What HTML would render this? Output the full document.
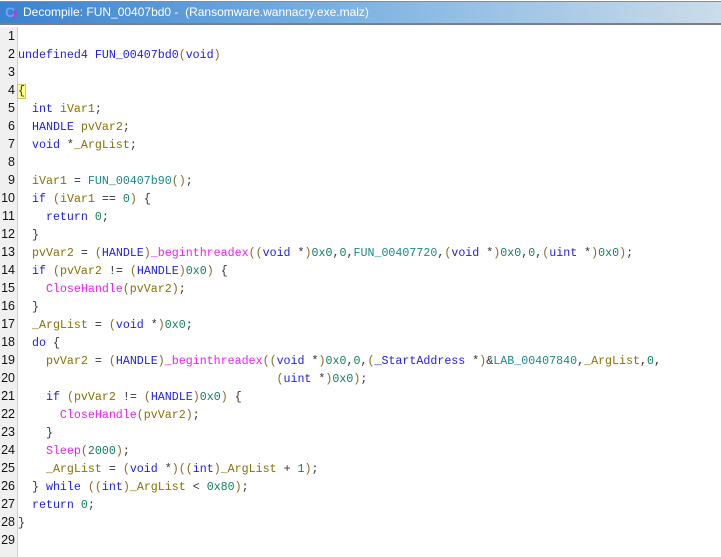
<!DOCTYPE html>
<html><head><style>
body{margin:0;width:721px;height:557px;background:#fff;overflow:hidden;position:relative;font-family:"Liberation Mono",monospace}
#tb{position:absolute;left:0;top:0;width:721px;height:27px;background:#fff}
#tb .bar{position:absolute;left:0;top:1px;width:721px;height:24px;border-top:1px solid #8a8a8a;border-bottom:2px solid #7a7f8a;background:linear-gradient(to right,#3a82cf,#7fb4e2 50%,#cbdcea);box-sizing:border-box}
#tb .t{position:absolute;left:23px;top:5px;font:12px "Liberation Sans",sans-serif;color:#fff;white-space:pre}
#tb .ic{position:absolute;left:5px;top:4px;font:bold 14px "Liberation Sans",sans-serif;color:#6fa0ff}
#tb .ic2{position:absolute;left:13px;top:10px;font:bold italic 10px "Liberation Sans",sans-serif;color:#e020d0}
#gut{position:absolute;left:0;top:27px;width:17px;height:530px;background:#f0f0f0;border-right:1px solid #d0d0d0}
.ln{position:absolute;left:0;width:15px;text-align:right;font:12.5px "Liberation Sans",sans-serif;color:#111;line-height:18px}
.cl{position:absolute;left:18px;font-size:11.65px;line-height:18px;white-space:pre;color:#333}
.k{color:#1e1ee0}.v{color:#8a7000}.f{color:#f020f0}.n{color:#108060}.g{color:#1a8a8a}.p{color:#8a6a20}
.br{background:#ffff90;outline:1px solid #c8c860}
</style></head><body>
<div id="tb"><div class="bar"></div><span class="ic">C</span><span class="ic2">f</span><span class="t">Decompile: FUN_00407bd0 -  (Ransomware.wannacry.exe.malz)</span></div>
<div id="gut"></div>
<div id="code"></div>
<script>
var L=[
'',
'<span class="k">undefined4</span> <span class="k">FUN_00407bd0</span><span class="p">(</span><span class="k">void</span><span class="p">)</span>',
'',
'<span class="br">{</span>',
'  <span class="k">int</span> <span class="v">iVar1</span>;',
'  <span class="k">HANDLE</span> <span class="v">pvVar2</span>;',
'  <span class="k">void</span> *<span class="v">_ArgList</span>;',
'',
'  <span class="v">iVar1</span> = <span class="g">FUN_00407b90</span><span class="p">()</span>;',
'  <span class="k">if</span> <span class="p">(</span><span class="v">iVar1</span> == <span class="n">0</span><span class="p">)</span> {',
'    <span class="k">return</span> <span class="n">0</span>;',
'  }',
'  <span class="v">pvVar2</span> = <span class="p">(</span><span class="k">HANDLE</span><span class="p">)</span><span class="f">_beginthreadex</span><span class="p">((</span><span class="k">void</span> *<span class="p">)</span><span class="n">0x0</span>,<span class="n">0</span>,<span class="g">FUN_00407720</span>,<span class="p">(</span><span class="k">void</span> *<span class="p">)</span><span class="n">0x0</span>,<span class="n">0</span>,<span class="p">(</span><span class="k">uint</span> *<span class="p">)</span><span class="n">0x0</span><span class="p">)</span>;',
'  <span class="k">if</span> <span class="p">(</span><span class="v">pvVar2</span> != <span class="p">(</span><span class="k">HANDLE</span><span class="p">)</span><span class="n">0x0</span><span class="p">)</span> {',
'    <span class="f">CloseHandle</span><span class="p">(</span><span class="v">pvVar2</span><span class="p">)</span>;',
'  }',
'  <span class="v">_ArgList</span> = <span class="p">(</span><span class="k">void</span> *<span class="p">)</span><span class="n">0x0</span>;',
'  <span class="k">do</span> {',
'    <span class="v">pvVar2</span> = <span class="p">(</span><span class="k">HANDLE</span><span class="p">)</span><span class="f">_beginthreadex</span><span class="p">((</span><span class="k">void</span> *<span class="p">)</span><span class="n">0x0</span>,<span class="n">0</span>,<span class="p">(</span><span class="k">_StartAddress</span> *<span class="p">)</span>&amp;<span class="g">LAB_00407840</span>,<span class="v">_ArgList</span>,<span class="n">0</span>,',
'                                     <span class="p">(</span><span class="k">uint</span> *<span class="p">)</span><span class="n">0x0</span><span class="p">)</span>;',
'    <span class="k">if</span> <span class="p">(</span><span class="v">pvVar2</span> != <span class="p">(</span><span class="k">HANDLE</span><span class="p">)</span><span class="n">0x0</span><span class="p">)</span> {',
'      <span class="f">CloseHandle</span><span class="p">(</span><span class="v">pvVar2</span><span class="p">)</span>;',
'    }',
'    <span class="f">Sleep</span><span class="p">(</span><span class="n">2000</span><span class="p">)</span>;',
'    <span class="v">_ArgList</span> = <span class="p">(</span><span class="k">void</span> *<span class="p">)((</span><span class="k">int</span><span class="p">)</span><span class="v">_ArgList</span> + <span class="n">1</span><span class="p">)</span>;',
'  } <span class="k">while</span> <span class="p">((</span><span class="k">int</span><span class="p">)</span><span class="v">_ArgList</span> &lt; <span class="n">0x80</span><span class="p">)</span>;',
'  <span class="k">return</span> <span class="n">0</span>;',
'}',
''];
var h='';
for(var i=0;i<L.length;i++){var y=27+18*i;h+='<div class="ln" style="top:'+y+'px">'+(i+1)+'</div><div class="cl" style="top:'+(y+1.5)+'px">'+L[i]+'</div>';}
document.getElementById('code').innerHTML=h;
</script>
</body></html>
